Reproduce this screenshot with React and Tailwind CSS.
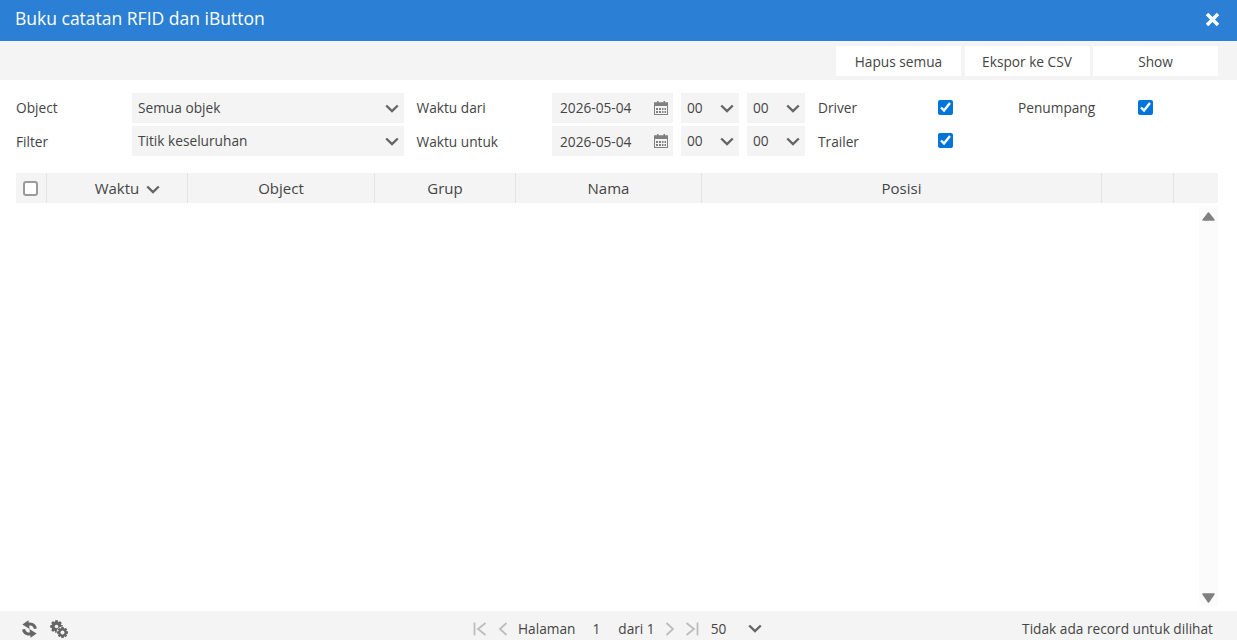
import React from "react";

const Chevron = ({ className = "" }) => (
  <svg width="14" height="9" viewBox="0 0 14 9" className={className}>
    <path d="M1.2 1.5 L7 7 L12.8 1.5" fill="none" stroke="#666" strokeWidth="2.4" />
  </svg>
);

const Calendar = () => (
  <svg width="14" height="14" viewBox="0 0 14 14" className="shrink-0">
    <rect x="0.5" y="2" width="13" height="11.5" fill="none" stroke="#808080" />
    <rect x="0" y="1.5" width="14" height="3.5" fill="#808080" />
    <rect x="3" y="0" width="1.5" height="3" fill="#808080" />
    <rect x="9.5" y="0" width="1.5" height="3" fill="#808080" />
    <path d="M2 7h2v2H2zM5 7h2v2H5zM8 7h1.5v2H8zM10.5 7H12v2h-1.5zM2 10h2v2H2zM5 10h2v2H5zM8 10h1.5v2H8zM10.5 10H12v2h-1.5z" fill="#808080" />
  </svg>
);

const Refresh = () => (
  <svg width="15" height="18" viewBox="0 0 15 18">
    <g>
      <path d="M13.4 8.8 C12.8 4.4 8.4 2.8 4.5 4.8" fill="none" stroke="#666" strokeWidth="3" />
      <path d="M0.4 4.6 L6.4 0.2 L7.6 9 Z" fill="#666" />
    </g>
    <g transform="rotate(180 7.5 9)">
      <path d="M13.4 8.8 C12.8 4.4 8.4 2.8 4.5 4.8" fill="none" stroke="#666" strokeWidth="3" />
      <path d="M0.4 4.6 L6.4 0.2 L7.6 9 Z" fill="#666" />
    </g>
  </svg>
);

const Gear = ({ cx, cy, r, hole }) => {
  const teeth = [0, 45, 90, 135, 180, 225, 270, 315];
  return (
    <g>
      {teeth.map((a) => (
        <rect
          key={a}
          x={cx - r * 0.24}
          y={cy - r * 1.22}
          width={r * 0.48}
          height={r * 2.44}
          fill="#666"
          transform={`rotate(${a} ${cx} ${cy})`}
        />
      ))}
      <circle cx={cx} cy={cy} r={r} fill="#666" />
      <circle cx={cx} cy={cy} r={hole} fill="#f4f4f4" />
    </g>
  );
};

const Gears = () => (
  <svg width="18" height="18" viewBox="0 0 18 18">
    <Gear cx="6.5" cy="6.5" r="5" hole="1.8" />
    <circle cx="12.5" cy="12.5" r="6" fill="#f4f4f4" />
    <Gear cx="12.5" cy="12.5" r="4.4" hole="2" />
  </svg>
);

const Select = ({ value, className = "" }) => (
  <div className={`h-[30px] bg-[#f4f4f4] flex items-center justify-between pl-[6px] pr-[5px] ${className}`}>
    <span>{value}</span>
    <Chevron />
  </div>
);

const DateField = ({ value, className = "" }) => (
  <div className="w-[121px] h-[30px] bg-[#f4f4f4] flex items-center justify-between pl-2 pr-[5px]">
    <span className={className}>{value}</span>
    <Calendar />
  </div>
);

const Check = ({ label, className = "", labelClass = "" }) => (
  <div className={`flex items-center ${className}`}>
    <span className={`w-[120px] ${labelClass}`}>{label}</span>
    <input type="checkbox" defaultChecked className="w-[15px] h-[15px] m-0 accent-[#0075d9]" />
  </div>
);

const columns = [
  { name: "Object", w: "w-[187px]" },
  { name: "Grup", w: "w-[141px]" },
  { name: "Nama", w: "w-[186px]" },
  { name: "Posisi", w: "w-[400px]" },
  { name: "", w: "w-[72px]" },
  { name: "", w: "w-[45px]" },
];

const PagerIcon = ({ d, className = "" }) => (
  <svg width="14" height="14" viewBox="0 0 14 14" className={`shrink-0 ${className}`}>
    <path d={d} fill="none" stroke="#bdbdbd" strokeWidth="1.8" />
  </svg>
);

export default function App() {
  return (
    <div className="w-[1237px] h-[640px] bg-white flex flex-col overflow-hidden text-[13.7px] text-[#444] font-['Open_Sans',sans-serif]">
      <div className="h-[41px] shrink-0 bg-[#2b7fd4] flex items-center justify-between pl-[15px] pr-[17px]">
        <h1 className="text-[17.5px] text-white font-normal pb-[4px]">Buku catatan RFID dan iButton</h1>
        <svg width="15" height="15" viewBox="0 0 15 15" className="mb-[3px]">
          <path d="M2 2 L13 13 M13 2 L2 13" stroke="#fff" strokeWidth="3.4" />
        </svg>
      </div>

      <div className="h-[39px] shrink-0 bg-[#f4f4f4] flex justify-end items-start gap-[3.5px] pt-[5px] pr-[19px]">
        {["Hapus semua", "Ekspor ke CSV", "Show"].map((b) => (
          <button key={b} className="w-[125px] h-[30px] pt-[2px] bg-white text-center">{b}</button>
        ))}
      </div>

      <div className="mt-[13px] pl-4 flex flex-col gap-[3px]">
        <div className="flex items-center">
          <span className="w-[116px]">Object</span>
          <Select value="Semua objek" className="w-[272px]" />
          <span className="w-[148px] pl-[12.5px]">Waktu dari</span>
          <DateField value="2026-05-04" />
          <Select value="00" className="w-[58px] ml-2" />
          <Select value="00" className="w-[58px] ml-2" />
          <Check label="Driver" className="ml-[13px] w-[200px]" />
          <Check label="Penumpang" />
        </div>
        <div className="flex items-center">
          <span className="w-[116px] mt-[2px]">Filter</span>
          <Select value="Titik keseluruhan" className="w-[272px]" />
          <span className="w-[148px] pl-[12.5px] mt-[2px]">Waktu untuk</span>
          <DateField value="2026-05-04" className="mt-[2px]" />
          <Select value="00" className="w-[58px] ml-2" />
          <Select value="00" className="w-[58px] ml-2" />
          <Check label="Trailer" className="ml-[13px]" labelClass="mt-[2px]" />
        </div>
      </div>

      <div className="mt-[17px] mx-[19px] ml-4 h-[30px] shrink-0 bg-[#f4f4f4] flex items-center text-[15px]">
        <div className="w-[30px] h-full flex items-center pl-[7px]">
          <input type="checkbox" className="appearance-none w-[15px] h-[15px] m-0 bg-white border-2 border-[#9a9a9a] rounded-[3px]" />
        </div>
        <div className="w-[141px] h-full border-l border-[#e3e3e3] flex items-center justify-center relative">
          <span>Waktu</span>
          <Chevron className="absolute left-[99px] top-[12px]" />
        </div>
        {columns.map((c, i) => (
          <div key={i} className={`${c.w} h-full border-l border-[#e3e3e3] flex items-center justify-center`}>
            {c.name}
          </div>
        ))}
      </div>

      <div className="flex-1 min-h-0 flex justify-end pr-[19px] pt-[3px] pb-[5px]">
        <div className="w-[19px] bg-[#fbfbfb] flex flex-col items-center justify-between pt-[6px] pb-[3px]">
          <svg width="13" height="9" viewBox="0 0 13 9">
            <path d="M6.5 1 L12 8 H1 Z" fill="#808080" stroke="#808080" strokeWidth="1.5" strokeLinejoin="round" />
          </svg>
          <svg width="13" height="10" viewBox="0 0 13 10">
            <path d="M1 1 H12 L6.5 9 Z" fill="#808080" stroke="#808080" strokeWidth="1.5" strokeLinejoin="round" />
          </svg>
        </div>
      </div>

      <div className="h-[29px] shrink-0 bg-[#f4f4f4] flex items-center pl-[22px] pr-[24px] pt-[7px]">
        <Refresh />
        <div className="ml-[13px]"><Gears /></div>
        <div className="flex-1 flex items-center pl-[405px]">
          <PagerIcon d="M1.5 0.5 V13.5 M12.5 1 L5 7 L12.5 13" />
          <PagerIcon d="M10.5 1 L4 7 L10.5 13" className="ml-[9px]" />
          <span className="ml-[8px]">Halaman</span>
          <span className="ml-[17px]">1</span>
          <span className="ml-[18px]">dari 1</span>
          <PagerIcon d="M3.5 1 L10 7 L3.5 13" className="ml-[8px]" />
          <PagerIcon d="M1.5 1 L9 7 L1.5 13 M12.5 0.5 V13.5" className="ml-[8px]" />
          <span className="ml-[12px]">50</span>
          <Chevron className="ml-[22px]" />
        </div>
        <span>Tidak ada record untuk dilihat</span>
      </div>
    </div>
  );
}
